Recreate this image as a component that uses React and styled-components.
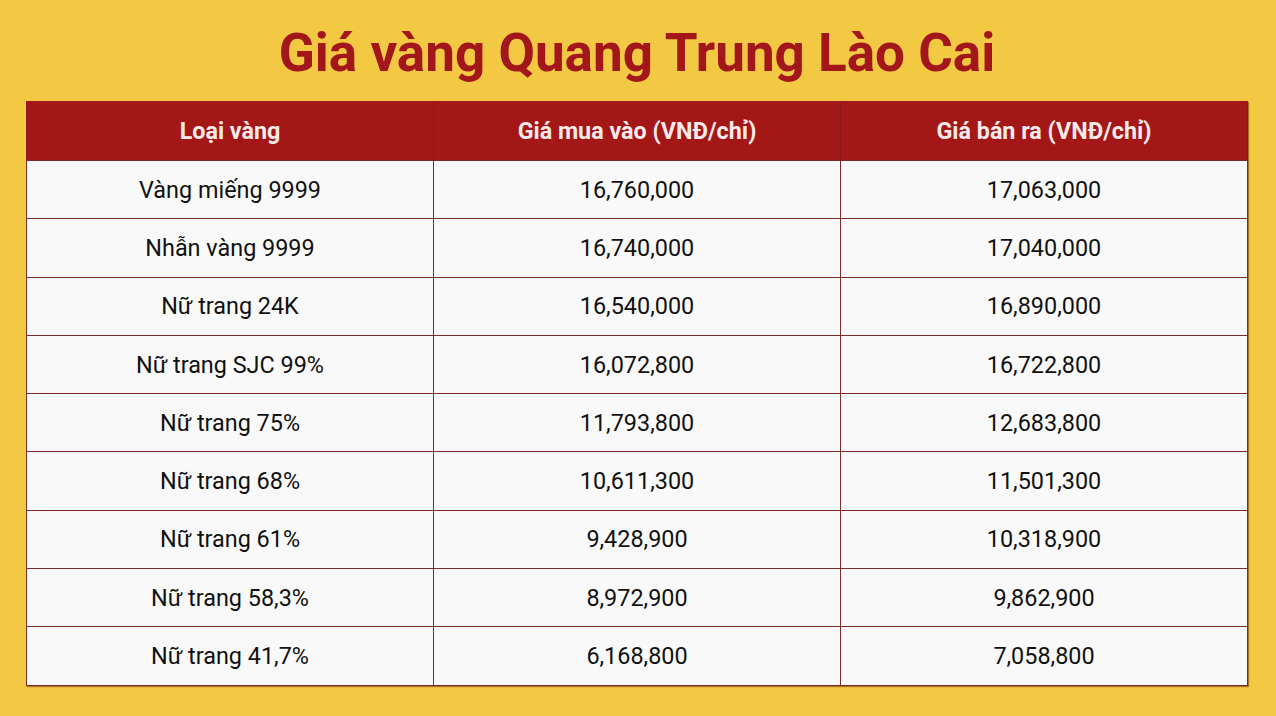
import styled, { createGlobalStyle } from "styled-components";

const Global = createGlobalStyle`
  html, body {
    margin: 0;
    padding: 0;
    background: #f3c944;
  }
  body {
    font-family: Roboto, "Noto Sans", sans-serif;
  }
`;

const Page = styled.div`
  width: 1276px;
  height: 716px;
  box-sizing: border-box;
  padding: 23px 28px 0 26px;
  display: flex;
  flex-direction: column;
  align-items: center;
`;

const Title = styled.h1`
  margin: 0 0 18px;
  font-size: 53px;
  line-height: 60px;
  font-weight: 700;
  color: #a3161a;
  text-align: center;
`;

const Table = styled.table`
  width: 1222px;
  border-collapse: collapse;
  table-layout: fixed;
  box-shadow: 1px 1px 1px rgba(120, 60, 20, 0.6);
`;

const HeadCell = styled.th`
  height: 59px;
  background: #a31717;
  color: #fbeaea;
  font-size: 23.3px;
  font-weight: 700;
  text-align: center;
  padding: 0;
  border-left: 1px solid ${(p) => (p.$first ? "#8a1a1a" : "#b23a3a")};
  border-right: 1px solid #8a1a1a;
`;

const Cell = styled.td`
  height: 57.3px;
  background: #f9f9f9;
  color: #111;
  font-size: 23.4px;
  text-align: center;
  padding: 0;
  border: 1px solid #7d2a24;
`;

const rows = [
  ["Vàng miếng 9999", "16,760,000", "17,063,000"],
  ["Nhẫn vàng 9999", "16,740,000", "17,040,000"],
  ["Nữ trang 24K", "16,540,000", "16,890,000"],
  ["Nữ trang SJC 99%", "16,072,800", "16,722,800"],
  ["Nữ trang 75%", "11,793,800", "12,683,800"],
  ["Nữ trang 68%", "10,611,300", "11,501,300"],
  ["Nữ trang 61%", "9,428,900", "10,318,900"],
  ["Nữ trang 58,3%", "8,972,900", "9,862,900"],
  ["Nữ trang 41,7%", "6,168,800", "7,058,800"],
];

const App = () => {
  return (
    <Page>
      <Global />
      <Title>Giá vàng Quang Trung Lào Cai</Title>
      <Table>
        <thead>
          <tr>
            <HeadCell $first>Loại vàng</HeadCell>
            <HeadCell>Giá mua vào (VNĐ/chỉ)</HeadCell>
            <HeadCell>Giá bán ra (VNĐ/chỉ)</HeadCell>
          </tr>
        </thead>
        <tbody>
          {rows.map((r) => (
            <tr key={r[0]}>
              {r.map((c, i) => (
                <Cell key={i}>{c}</Cell>
              ))}
            </tr>
          ))}
        </tbody>
      </Table>
    </Page>
  );
};

export default App;
